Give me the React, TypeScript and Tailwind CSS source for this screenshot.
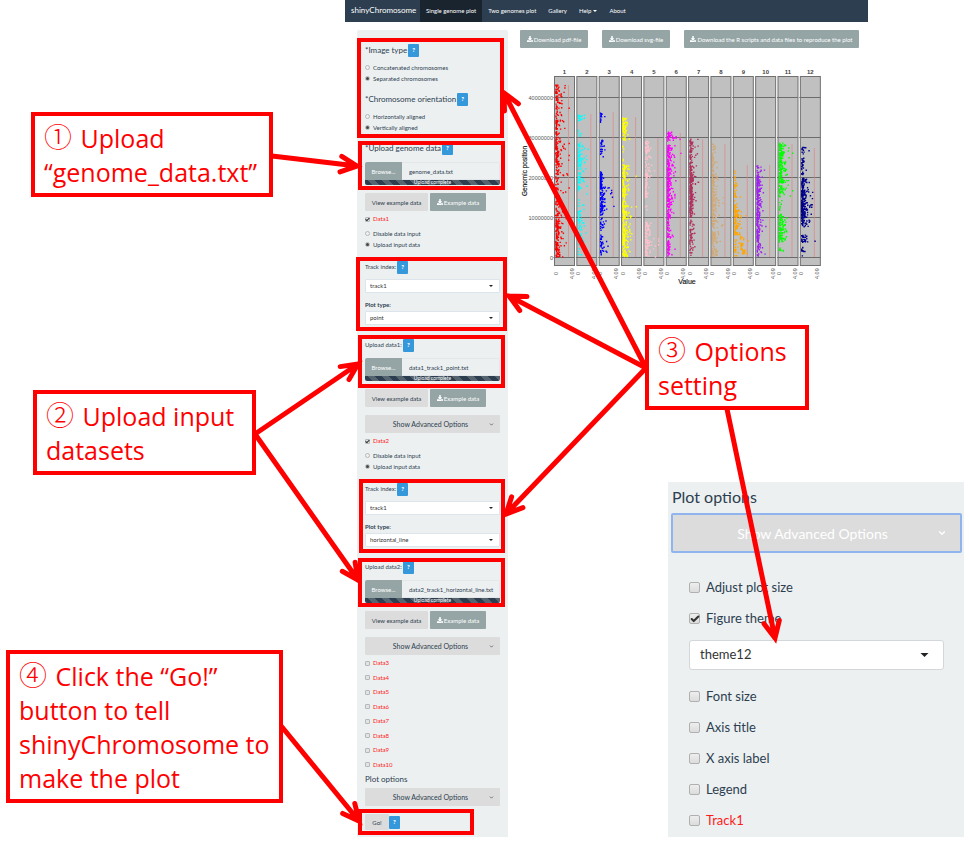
import React, { useId } from "react";
import { FaDownload } from "react-icons/fa";
import { Check, ChevronDown } from "lucide-react";

function Help() {
  return (
    <button
      type="button"
      aria-label="Help"
      className="flex h-[13px] w-[11px] flex-none items-center justify-center rounded-[1px] bg-[#3498db] text-[6px] font-black leading-none text-white"
    >
      ?
    </button>
  );
}

function Title({ children, big }: { children: React.ReactNode; big?: boolean }) {
  return (
    <div className="flex h-[14px] items-center gap-px">
      <span className={big ? "text-[8px] leading-[14px]" : "text-[6px] leading-[14px]"}>{children}</span>
      <Help />
    </div>
  );
}

function Radios({ options }: { options: string[] }) {
  const name = useId();
  return (
    <div className="grid grid-rows-2">
      {options.map((o, i) => (
        <label key={o} className="flex h-[11px] items-center gap-[3px] text-[6px] leading-[11px]">
          <span className="grid place-items-center">
            <input
              type="radio"
              name={name}
              defaultChecked={i === 1}
              className="peer col-start-1 row-start-1 size-[5px] appearance-none rounded-full border border-[#b4b8ba] bg-[#f1f1f1]"
            />
            <span className="col-start-1 row-start-1 hidden size-[3px] rounded-full bg-[#444] peer-checked:block" />
          </span>
          {o}
        </label>
      ))}
    </div>
  );
}

function SmallCheck({ label, checked }: { label: string; checked?: boolean }) {
  return (
    <label className="flex h-[14px] items-center gap-[3px] text-[6px] leading-[14px] text-[#ff1a1a]">
      <span className="grid place-items-center">
        <input
          type="checkbox"
          defaultChecked={checked}
          className="peer col-start-1 row-start-1 size-[5px] appearance-none rounded-[1px] border border-[#b4b8ba] bg-[#e4e4e4]"
        />
        <Check className="pointer-events-none col-start-1 row-start-1 hidden size-[5px] text-[#222] peer-checked:block" strokeWidth={5} />
      </span>
      {label}
    </label>
  );
}

function Upload({ file, label }: { file: string; label: string }) {
  return (
    <div>
      <div className="flex h-[18px]">
        <label className="flex w-[37px] flex-none items-center justify-center rounded-tl-[2px] bg-[#95a5a6] text-[6px] text-white">
          Browse...
          <input type="file" className="sr-only" />
        </label>
        <input
          readOnly
          aria-label={label}
          value={file}
          className="min-w-0 flex-1 rounded-tr-[2px] border-y border-r border-[#e3e7e9] bg-[#ecf0f1] pl-[7px] pr-[4px] text-[6px] text-[#2c3e50]"
        />
      </div>
      <div className="flex h-[5px] items-center justify-center overflow-hidden rounded-b-[2px] bg-[repeating-linear-gradient(45deg,#2c3e50_0px,#2c3e50_5px,#56646f_5px,#56646f_10px)] text-[5px] leading-[5px] text-white">
        Upload complete
      </div>
    </div>
  );
}

function ExampleButtons() {
  return (
    <div className="mt-2 flex h-[18px] gap-[2px] text-[6px]">
      <button type="button" className="w-[63px] rounded-[1px] bg-[#dcdcdc]">
        View example data
      </button>
      <button type="button" className="flex w-[56px] items-center justify-center gap-px rounded-[1px] bg-[#95a5a6] text-white">
        <FaDownload className="size-[6px]" />
        Example data
      </button>
    </div>
  );
}

function Advanced() {
  return (
    <button type="button" className="grid h-[18px] w-full grid-cols-[1fr_auto_1fr] items-center rounded-[1px] bg-[#dcdcdc] px-[6px] text-[7px]">
      <span />
      <span className="-ml-1">Show Advanced Options</span>
      <ChevronDown className="size-[5px] justify-self-end" strokeWidth={3} />
    </button>
  );
}

function Caret({ className }: { className: string }) {
  return (
    <svg viewBox="0 0 10 5" className={className} aria-hidden="true">
      <path d="M0 0H10L5 5Z" fill="#222" />
    </svg>
  );
}

function SmallSelect({ value, label }: { value: string; label: string }) {
  return (
    <div className="grid items-center">
      <select
        aria-label={label}
        className="col-start-1 row-start-1 h-[14px] w-full appearance-none rounded-[1px] border border-[#dce4ec] bg-white px-1 text-[6px] leading-[12px] text-[#333]"
      >
        <option>{value}</option>
      </select>
      <Caret className="pointer-events-none col-start-1 row-start-1 mr-[7px] h-[2px] w-[4px] justify-self-end" />
    </div>
  );
}

function DataBlock({ plot, title, file }: { plot: string; title: string; file: string }) {
  return (
    <>
      <div className="mt-[2px]">
        <Radios options={["Disable data input", "Upload input data"]} />
      </div>
      <div className="mt-[10px]">
        <Title>Track index:</Title>
      </div>
      <div className="mt-[5px]">
        <SmallSelect value="track1" label="Track index" />
      </div>
      <div className="mt-[7px] h-[10px] text-[6px] font-bold leading-[10px]">Plot type:</div>
      <div className="mt-px">
        <SmallSelect value={plot} label="Plot type" />
      </div>
      <div className="mt-[13px]">
        <Title>{title}</Title>
      </div>
      <div className="mt-[6px]">
        <Upload file={file} label={title} />
      </div>
      <ExampleButtons />
      <div className="mt-2">
        <Advanced />
      </div>
    </>
  );
}

function Sidebar() {
  return (
    <form className="mt-2 w-[151px] flex-none rounded-t-[2px] bg-[#ecf0f1] px-2 pb-[7px] pt-[13px]" onSubmit={(e) => e.preventDefault()}>
      <Title big>*Image type</Title>
      <div className="mt-[5px]">
        <Radios options={["Concatenated chromosomes", "Separated chromosomes"]} />
      </div>
      <div className="mt-2">
        <Title big>*Chromosome orientation</Title>
      </div>
      <div className="mt-[5px]">
        <Radios options={["Horizontally aligned", "Vertically aligned"]} />
      </div>
      <div className="mt-2">
        <Title big>*Upload genome data</Title>
      </div>
      <div className="mt-[7px]">
        <Upload file="genome_data.txt" label="Genome data file" />
      </div>
      <ExampleButtons />
      <div className="mt-px">
        <SmallCheck label="Data1" checked />
      </div>
      <DataBlock plot="point" title="Upload data1:" file="data1_track1_point.txt" />
      <div className="mt-px">
        <SmallCheck label="Data2" checked />
      </div>
      <DataBlock plot="horizontal_line" title="Upload data2:" file="data2_track1_horizontal_line.txt" />
      <div className="mt-px grid h-29 grid-rows-8 items-center">
        {["Data3", "Data4", "Data5", "Data6", "Data7", "Data8", "Data9", "Data10"].map((d) => (
          <SmallCheck key={d} label={d} />
        ))}
      </div>
      <div className="h-[14px] text-[8px] leading-[14px]">Plot options</div>
      <div className="mt-[2px]">
        <Advanced />
      </div>
      <div className="mt-2 flex h-4 items-center">
        <button type="submit" className="h-4 w-[24px] rounded-[1px] bg-[#dcdcdc] text-[6px]">
          Go!
        </button>
        <Help />
      </div>
    </form>
  );
}

type Band = [number, number, number, number, number?];
const chromosomes: { color: string; top: number; bands: Band[] }[] = [
  { color: "#ff0000", top: 85, bands: [[85, 97, 35, 4], [97, 120, 36, 3], [120, 168, 150, 3], [170, 215, 70, 3.5], [215, 257, 150, 3]] },
  { color: "#00ffff", top: 114, bands: [[115, 121, 20, 3], [128, 137, 8, 2], [143, 190, 110, 3.5], [190, 205, 4, 2], [205, 245, 65, 3], [245, 257, 6, 2]] },
  { color: "#0000ff", top: 112, bands: [[113, 117, 14, 2], [118, 126, 4, 3], [140, 157, 25, 2], [172, 187, 60, 1], [187, 215, 95, 3.5], [218, 232, 20, 2], [235, 255, 35, 2.5]] },
  { color: "#ffff00", top: 117, bands: [[118, 140, 75, 3], [145, 165, 6, 2], [165, 257, 330, 3]] },
  { color: "#ffc0cb", top: 138, bands: [[140, 160, 45, 3], [160, 177, 32, 3], [177, 198, 55, 2], [205, 210, 4, 1], [222, 257, 110, 3]] },
  { color: "#ff00ff", top: 133, bands: [[132, 141, 38, 3], [145, 215, 260, 2.5], [215, 257, 90, 2]] },
  { color: "#b03060", top: 139, bands: [[139, 155, 38, 3], [155, 170, 35, 3], [170, 215, 200, 2], [180, 183, 10, 5], [215, 257, 60, 2]] },
  { color: "#d2a875", top: 144, bands: [[144, 155, 12, 3], [155, 170, 30, 2], [170, 257, 250, 3]] },
  { color: "#ffa500", top: 165, bands: [[170, 185, 10, 2], [185, 210, 30, 2], [210, 235, 90, 3], [235, 250, 25, 2, 6], [240, 256, 20, 2], [250, 255, 15, 2, 8]] },
  { color: "#a020f0", top: 165, bands: [[164, 175, 16, 3], [175, 210, 140, 2], [210, 240, 110, 2], [240, 257, 30, 3]] },
  { color: "#00ff00", top: 144, bands: [[143, 162, 110, 3], [162, 183, 110, 3], [185, 197, 38, 4], [200, 215, 10, 2], [215, 242, 120, 3], [248, 254, 8, 2]] },
  { color: "#00008b", top: 148, bands: [[147, 155, 14, 3], [157, 175, 30, 2.5], [178, 190, 55, 3], [190, 218, 190, 3], [218, 227, 30, 3], [235, 243, 30, 3], [247, 256, 12, 2]] },
];

function scatter(bands: Band[], seed: number) {
  let s = seed;
  const rnd = () => {
    s = (s * 16807) % 2147483647;
    return s / 2147483647;
  };
  let d = "";
  for (const [a, b, n, spread, shift = 0] of bands) {
    for (let i = 0; i < n; i++) {
      const x = Math.min(14, 0.5 + shift - Math.log(1 - rnd()) * spread * 0.7);
      const y = a + rnd() * (b - a);
      d += `M${x.toFixed(1)} ${(y - 0.7).toFixed(1)}h1.4v1.4h-1.4z`;
    }
  }
  return d;
}

const ticks: [string, number][] = [["40000000", 97.5], ["30000000", 137.5], ["20000000", 177.5], ["10000000", 217.5], ["0", 257.5]];

function GenomePlot() {
  return (
    <svg viewBox="517 64 311 224" width="311" height="224" className="ml-[9px] mt-4 font-['Liberation_Sans',Arial,sans-serif]" role="img" aria-label="Genomic position by value for 12 chromosomes">
      {ticks.map(([t, y]) => (
        <text key={t} x="553" y={y + 2} fontSize="5.5" fill="#555" textAnchor="end">{t}</text>
      ))}
      {chromosomes.map((c, i) => {
        const x = 554.5 + i * 22.35;
        return (
          <g key={c.color} transform={`translate(${x} 0)`}>
            <text x="10" y="74" fontSize="6" fontWeight="bold" fill="#444" textAnchor="middle">{i + 1}</text>
            <rect x="0" y="76.5" width="20" height="189" fill="#c0c0c0" />
            {ticks.map(([t, y]) => (
              <path key={t} d={`M-1 ${y}H20`} stroke="#6b6b6b" strokeWidth="1" />
            ))}
            <path d={`M14 ${c.top}V257`} stroke="#df8585" strokeWidth="0.7" />
            <path d={scatter(c.bands, 977 + i * 7919)} fill={c.color} />
            <rect x="0" y="76.5" width="20" height="189" fill="none" stroke="#707070" strokeWidth="1" />
            <text transform="translate(3 275) rotate(-90)" fontSize="5.5" fill="#555">0</text>
            <text transform="translate(19 279) rotate(-90)" fontSize="5.5" fill="#555">4.09</text>
          </g>
        );
      })}
      <text x="687" y="284" fontSize="7" fill="#111" stroke="#111" strokeWidth="0.15" textAnchor="middle">Value</text>
      <text transform="translate(527 171) rotate(-90)" fontSize="6.5" fill="#111" stroke="#111" strokeWidth="0.15" textAnchor="middle">Genomic position</text>
    </svg>
  );
}

function BigCheck({ label, checked, red }: { label: string; checked?: boolean; red?: boolean }) {
  return (
    <label className={red ? "flex h-[31px] items-center gap-[6px] text-[#ff1a1a]" : "flex h-[31px] items-center gap-[6px]"}>
      <span className="grid place-items-center">
        <input
          type="checkbox"
          defaultChecked={checked}
          className="peer col-start-1 row-start-1 size-[11px] appearance-none rounded-[2px] border border-[#b0b0b0] bg-linear-to-b from-[#eeeeee] to-[#dcdcdc]"
        />
        <Check className="pointer-events-none col-start-1 row-start-1 hidden size-[10px] text-[#333] peer-checked:block" strokeWidth={5} />
      </span>
      {label}
    </label>
  );
}

function PlotOptions() {
  return (
    <section className="ml-[160px] mr-[5px] mt-[72px] bg-[#ecf0f1] pb-px pl-[3px] pr-[2px] text-[13px]">
      <h2 className="h-[31px] pl-px text-[16px] leading-[30px]">Plot options</h2>
      <button
        type="button"
        className="grid h-10 w-full grid-cols-[1fr_auto_1fr] items-center rounded-[2px] border-2 border-[#8fb4ee] bg-[#dcdcdc] px-[13px] text-[14px] text-white"
      >
        <span />
        <span className="-ml-2">Show Advanced Options</span>
        <ChevronDown className="size-[10px] justify-self-end" strokeWidth={3} />
      </button>
      <div className="px-[18px] pt-[19px]">
        <BigCheck label="Adjust plot size" />
        <BigCheck label="Figure theme" checked />
        <div className="my-[6px] grid items-center">
          <select
            aria-label="Figure theme"
            className="col-start-1 row-start-1 h-[30px] w-full appearance-none rounded-[3px] border border-[#d3d7d9] bg-white px-[10px] text-[13px] text-[#333]"
          >
            <option>theme12</option>
          </select>
          <Caret className="pointer-events-none col-start-1 row-start-1 mr-[15px] h-[4px] w-[9px] justify-self-end" />
        </div>
        <div className="pt-[5px]">
          <BigCheck label="Font size" />
          <BigCheck label="Axis title" />
          <BigCheck label="X axis label" />
          <BigCheck label="Legend" />
          <BigCheck label="Track1" red />
        </div>
      </div>
    </section>
  );
}

function Callout({ n, children, className }: { n: string; children: React.ReactNode; className: string }) {
  return (
    <p className={`border-4 border-[#ff0000] bg-white pb-[4px] pl-[9px] pt-[5px] font-['Open_Sans','Noto_Sans_CJK_SC',sans-serif] text-[25px] leading-[34px] text-[#ff0000] ${className}`}>
      <span className="mr-[2px] font-['Noto_Sans_CJK_SC',sans-serif] text-[28px] font-light leading-none">{n}</span> {children}
    </p>
  );
}

const highlights = [
  [357, 38, 147, 100],
  [358, 141, 147, 49],
  [356, 257, 151, 74],
  [358, 335, 147, 53],
  [359, 479, 146, 74],
  [358, 558, 147, 49],
  [358, 809, 116, 26],
];

const arrows = [
  [272, 156, 357, 166],
  [255, 434, 358, 364],
  [255, 434, 358, 580],
  [646, 368, 504, 93],
  [646, 368, 509, 296],
  [646, 368, 506, 514],
  [727, 409, 775, 638],
  [282, 727, 359, 821],
];

function arrowPath([x1, y1, x2, y2]: number[]) {
  const a = Math.atan2(y2 - y1, x2 - x1);
  const wing = (t: number) => `${(x2 - 18 * Math.cos(a + t)).toFixed(1)} ${(y2 - 18 * Math.sin(a + t)).toFixed(1)}`;
  return `M${x1} ${y1}L${x2} ${y2}M${wing(0.45)}L${x2} ${y2}L${wing(-0.45)}`;
}

function Annotations() {
  return (
    <svg width="969" height="844" viewBox="0 0 969 844" className="pointer-events-none absolute left-0 top-0" fill="none" stroke="#ff0000" aria-hidden="true">
      {highlights.map(([x, y, w, h]) => (
        <rect key={y} x={x + 2} y={y + 2} width={w - 4} height={h - 4} strokeWidth="4" />
      ))}
      {arrows.map((a) => (
        <path key={a.join()} d={arrowPath(a)} strokeWidth="5" strokeLinecap="round" />
      ))}
    </svg>
  );
}

const download = "flex items-center justify-center gap-px whitespace-nowrap rounded-[1px] bg-[#95a5a6] text-[6px] text-white";

export default function App() {
  return (
    <main className="relative flex items-start bg-white font-[Lato,sans-serif] text-[#2c3e50]">
      <aside className="w-[345px] flex-none pt-28">
        <Callout n="①" className="ml-[31px] w-[242px]">
          Upload
          <br />
          “genome_data.txt”
        </Callout>
        <Callout n="②" className="ml-[33px] mt-[193px] w-[223px]">
          Upload input
          <br />
          datasets
        </Callout>
        <Callout n="④" className="ml-[6px] mt-[175px] w-[277px]">
          Click the “Go!”
          <br />
          button to tell
          <br />
          shinyChromosome to
          <br />
          make the plot
        </Callout>
      </aside>
      <div className="min-w-0 flex-1">
        <nav className="mr-[101px] flex h-[22px] items-stretch bg-[#2c3e50] text-[6px] leading-[21px] text-white">
          <a href="#home" className="w-[75px] pl-[6px] text-[8px]">shinyChromosome</a>
          <a href="#single" className="bg-[#1a242f] px-[6px]">Single genome plot</a>
          <a href="#two" className="px-[6px]">Two genomes plot</a>
          <a href="#gallery" className="px-[6px]">Gallery</a>
          <a href="#help" className="flex gap-[2px] px-[6px]">
            Help
            <svg viewBox="0 0 10 5" className="h-[2px] w-[4px] self-center" aria-hidden="true"><path d="M0 0H10L5 5Z" fill="#fff" /></svg>
          </a>
          <a href="#about" className="px-[6px]">About</a>
        </nav>
        <div className="flex items-start pl-3">
          <Sidebar />
          <div className="min-w-0 flex-1 pt-2">
            <div className="ml-3 flex h-[18px] gap-[14px]">
              <button type="button" className={`${download} w-[68px]`}><FaDownload className="size-[6px]" />Download pdf-file</button>
              <button type="button" className={`${download} w-[68px]`}><FaDownload className="size-[6px]" />Download svg-file</button>
              <button type="button" className={`${download} w-[175px]`}><FaDownload className="size-[6px]" />Download the R scripts and data files to reproduce the plot</button>
            </div>
            <GenomePlot />
            <Callout n="③" className="ml-[137px] mt-[37px] w-[164px]">
              Options
              <br />
              setting
            </Callout>
            <PlotOptions />
          </div>
        </div>
      </div>
      <Annotations />
    </main>
  );
}
